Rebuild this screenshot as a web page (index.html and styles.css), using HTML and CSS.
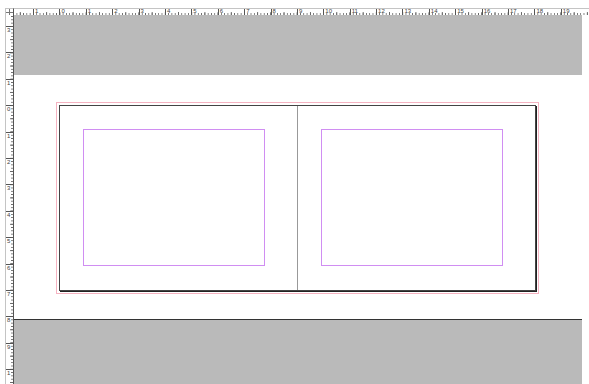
FILE: index.html
```html
<!DOCTYPE html>
<html lang="en">
<head>
    <meta charset="UTF-8">
    <title>Layout - Spread</title>
    <link rel="stylesheet" href="styles.css">
</head>
<body>
    <div class="app">
        <div class="corner"></div>

        <!-- horizontal ruler -->
        <div class="hruler">
            <div class="hlead"></div>
            <div class="hunit"><span>1</span></div>
            <div class="hunit"><span>0</span></div>
            <div class="hunit"><span>1</span></div>
            <div class="hunit"><span>2</span></div>
            <div class="hunit"><span>3</span></div>
            <div class="hunit"><span>4</span></div>
            <div class="hunit"><span>5</span></div>
            <div class="hunit"><span>6</span></div>
            <div class="hunit"><span>7</span></div>
            <div class="hunit"><span>8</span></div>
            <div class="hunit"><span>9</span></div>
            <div class="hunit"><span>10</span></div>
            <div class="hunit"><span>11</span></div>
            <div class="hunit"><span>12</span></div>
            <div class="hunit"><span>13</span></div>
            <div class="hunit"><span>14</span></div>
            <div class="hunit"><span>15</span></div>
            <div class="hunit"><span>16</span></div>
            <div class="hunit"><span>17</span></div>
            <div class="hunit"><span>18</span></div>
            <div class="hunit"><span>19</span></div>
        </div>

        <!-- vertical ruler -->
        <div class="vruler">
            <div class="vlead"></div>
            <div class="vunit"><span>3</span></div>
            <div class="vunit"><span>2</span></div>
            <div class="vunit"><span>1</span></div>
            <div class="vunit"><span>0</span></div>
            <div class="vunit"><span>1</span></div>
            <div class="vunit"><span>2</span></div>
            <div class="vunit"><span>3</span></div>
            <div class="vunit"><span>4</span></div>
            <div class="vunit"><span>5</span></div>
            <div class="vunit"><span>6</span></div>
            <div class="vunit"><span>7</span></div>
            <div class="vunit"><span>8</span></div>
            <div class="vunit"><span>9</span></div>
            <div class="vunit"><span>1</span></div>
        </div>

        <!-- pasteboard + spread -->
        <div class="canvas">
            <div class="paste"></div>
            <div class="board">
                <div class="bleed">
                    <div class="spread">
                        <div class="page"><div class="margin"></div></div>
                        <div class="page"><div class="margin"></div></div>
                    </div>
                </div>
            </div>
            <div class="paste bottom"></div>
        </div>
    </div>
</body>
</html>
```

FILE: styles.css
```css
body {
    margin: 0;
    width: 589px;
    height: 384px;
    overflow: hidden;
    background: #fff;
    font-family: "Liberation Sans", Arial, sans-serif;
}
.app {
    display: grid;
    grid-template-columns: 9px 1fr;
    grid-template-rows: 7px 1fr;
    height: 384px;
    padding: 8px 0 0 5px;
    box-sizing: border-box;
}

/* rulers */
.corner {
    border-top: 1px solid #c4c4c4;
    border-left: 1px solid #c4c4c4;
    border-right: 1px solid #555;
    background:
        linear-gradient(#777, #777) 3px 0 / 1px 100% no-repeat,
        linear-gradient(#777, #777) 0 3px / 100% 1px no-repeat;
}
.hruler {
    display: flex;
    overflow: hidden;
    border-top: 1px solid #c4c4c4;
    background-image:
        linear-gradient(to right, #666 1px, transparent 1px),
        linear-gradient(to right, #666 1px, transparent 1px);
    background-size: 3.3px 2px, 13.2px 3px;
    background-position: 19px 100%, 19px 100%;
    background-repeat: repeat-x;
}
.hlead {
    flex: 0 0 19px;
}
.hunit {
    flex: 0 0 26.4px;
    padding-left: 2px;
    box-sizing: border-box;
    background: linear-gradient(#555, #555) left top / 1px 100% no-repeat;
    font-size: 6px;
    line-height: 5px;
    color: #444;
}
.vruler {
    overflow: hidden;
    border-left: 1px solid #c4c4c4;
    border-right: 1px solid #555;
    background-image:
        linear-gradient(to bottom, #666 1px, transparent 1px),
        linear-gradient(to bottom, #666 1px, transparent 1px);
    background-size: 2px 3.3px, 3px 13.2px;
    background-position: 100% 11px, 100% 11px;
    background-repeat: repeat-y;
}
.vlead {
    height: 11px;
}
.vunit {
    height: 26.4px;
    padding: 1px 0 0 1px;
    box-sizing: border-box;
    background: linear-gradient(#555, #555) left top / 100% 1px no-repeat;
    font-size: 6px;
    line-height: 6px;
    color: #444;
}

/* pasteboard */
.canvas {
    display: flex;
    flex-direction: column;
    overflow: hidden;
}
.paste {
    flex: 0 0 60px;
    margin-right: 7px;
    background: #bababa;
}
.paste.bottom {
    flex: 1;
    border-top: 1px solid #333;
}
.board {
    flex: 0 0 244px;
    padding: 27px 0 0 42px;
    box-sizing: border-box;
}
.bleed {
    width: fit-content;
    padding: 2px;
    border: 1px solid #f5b3c1;
}
.spread {
    display: flex;
    border: 1px solid #444;
    box-shadow: 1px 1px 0 #222;
}
.page {
    width: 237px;
    height: 184px;
    padding: 23px 0 0 23px;
    box-sizing: border-box;
}
.page + .page {
    width: 238px;
    border-left: 1px solid #999;
}
.margin {
    width: 182px;
    height: 137px;
    border: 1px solid #d08ef2;
    box-sizing: border-box;
}
```
